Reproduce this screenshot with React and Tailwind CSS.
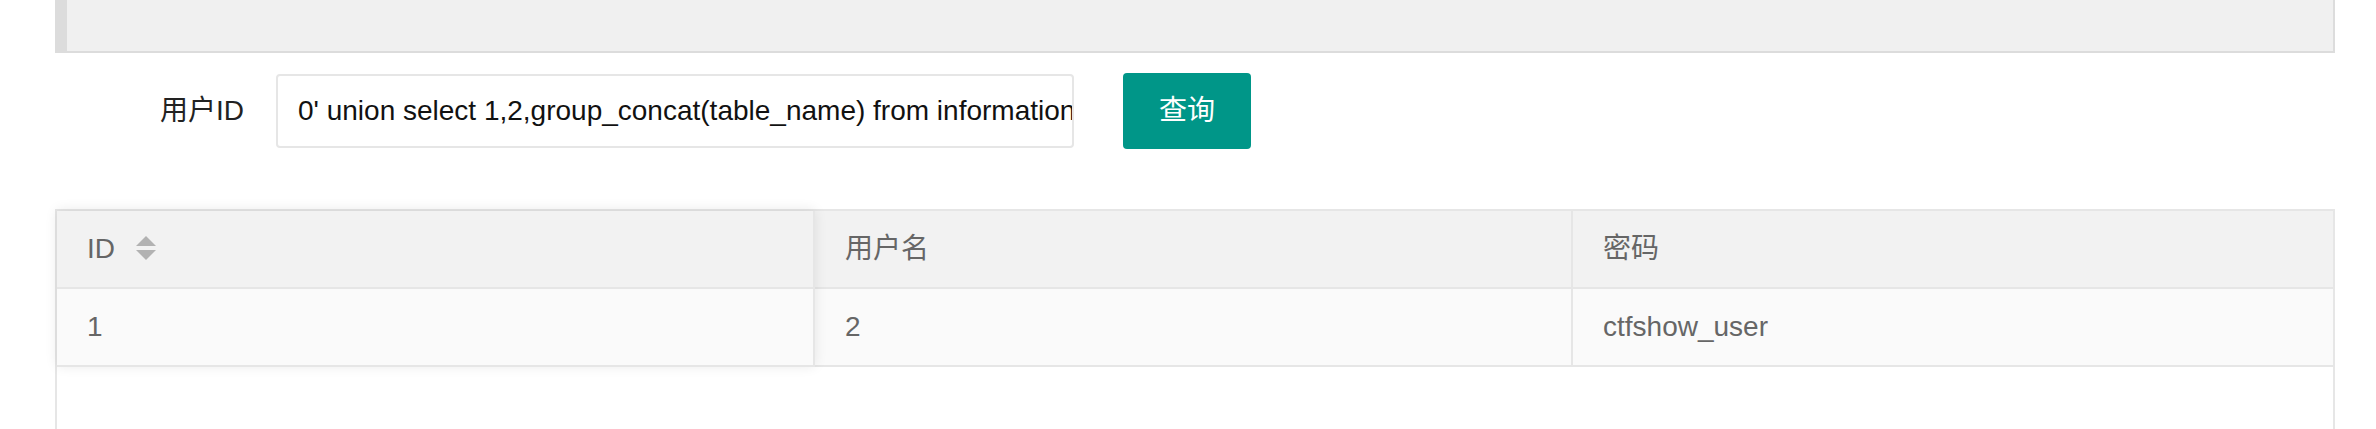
const font = { fontFamily: '"Liberation Sans", Arial, "Noto Sans CJK SC", sans-serif' };

const SortIcon = () => (
  <svg width="20" height="26" viewBox="0 0 20 26" className="ml-[21px]">
    <path d="M10 0 L20 10 L0 10 Z" fill="#b2b2b2" />
    <path d="M0 14 L20 14 L10 24 Z" fill="#b2b2b2" />
  </svg>
);

const columns = [
  { title: 'ID', value: '1', sort: true },
  { title: '用户名', value: '2' },
  { title: '密码', value: 'ctfshow_user' },
];

export default function App() {
  return (
    <div className="w-[2376px] h-[429px] overflow-hidden bg-white" style={font}>
      <div className="ml-[55px] w-[2280px]">
        <div className="h-[53px] bg-[#f0f0f0] border-l-[12px] border-r-2 border-b-2 border-[#dcdcdc]" />

        <div className="mt-[20px] flex items-center h-[76px]">
          <label className="w-[189px] text-right text-[28px] text-[#222]">用户ID</label>
          <div className="ml-[32px] w-[798px] h-[74px] border-2 border-[#e6e6e6] rounded-[4px] bg-white pl-[20px] flex items-center overflow-hidden">
            <span className="whitespace-nowrap text-[28px] text-[#111]">
              0' union select 1,2,group_concat(table_name) from information
            </span>
          </div>
          <button className="ml-[49px] w-[128px] h-[76px] bg-[#009688] rounded-[4px] text-white text-[28px]">查询</button>
        </div>

        <div className="mt-[60px] h-[220px] border-t-2 border-x-2 border-[#e6e6e6] flex items-start text-[28px] text-[#666]">
          {columns.map((col, i) => (
            <div
              key={col.title}
              className={
                i === 0
                  ? 'w-[758px] border-r-2 border-[#e6e6e6] relative z-10 shadow-[0_-1px_12px_rgba(0,0,0,0.09)]'
                  : i === 1
                  ? 'w-[758px] border-r-2 border-[#e6e6e6]'
                  : 'flex-1'
              }
            >
              <div className="h-[78px] bg-[#f2f2f2] border-b-2 border-[#e6e6e6] pl-[30px] flex items-center">
                <span>{col.title}</span>
                {col.sort && <SortIcon />}
              </div>
              <div className="h-[78px] bg-[#fafafa] border-b-2 border-[#e6e6e6] pl-[30px] flex items-center">
                {col.value}
              </div>
            </div>
          ))}
        </div>
      </div>
    </div>
  );
}
